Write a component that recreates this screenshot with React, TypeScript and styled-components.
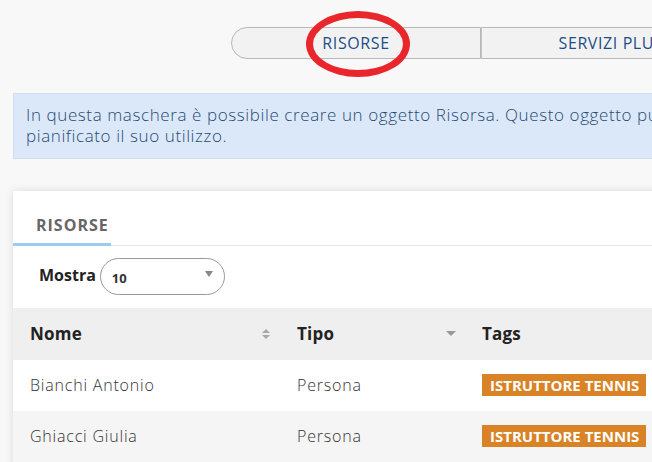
import React from "react";
import styled, { createGlobalStyle } from "styled-components";

const Global = createGlobalStyle`
  html, body { margin: 0; padding: 0; background: #f8f8f8; overflow: hidden; }
  body { font-family: "Open Sans", "Lato", sans-serif; color: #333; }
`;

const Page = styled.div`
  width: 1000px;
  padding-top: 27px;
`;

const TabBar = styled.div`
  display: flex;
  margin-left: 231px;
  height: 32px;
`;

const Tab = styled.div<{ $first?: boolean }>`
  position: relative;
  width: ${(p) => (p.$first ? "250px" : "260px")};
  box-sizing: border-box;
  display: flex;
  align-items: center;
  justify-content: center;
  background: #f2f2f2;
  border: 1px solid #b8b8b8;
  border-left: ${(p) => (p.$first ? "1px solid #b8b8b8" : "1px solid #c4c4c4")};
  border-radius: ${(p) => (p.$first ? "16px 0 0 16px" : "0")};
  color: #1d4d86;
  font-size: 16px;
  letter-spacing: 0.6px;
`;

const Highlight = styled.span`
  position: absolute;
  left: 74px;
  top: -17px;
  width: 104px;
  height: 66px;
  box-sizing: border-box;
  border: 7px solid #e9262b;
  border-radius: 50%;
`;

const Info = styled.div`
  margin: 34px 0 0 13px;
  height: 66px;
  box-sizing: border-box;
  background: #dbe8fa;
  border: 1px solid #d0def0;
  padding: 10px 12px;
  font-size: 17px;
  line-height: 21px;
  letter-spacing: 0.6px;
  color: #284a72;
  font-weight: 300;
  white-space: nowrap;
`;

const Card = styled.div`
  margin: 32px 0 0 13px;
  background: #fff;
  box-shadow: 0 0 8px rgba(0, 0, 0, 0.12);
  min-height: 400px;
`;

const CardTabs = styled.div`
  display: flex;
  height: 54px;
  border-bottom: 1px solid #e6e6e6;
`;

const CardTab = styled.div`
  width: 98px;
  box-sizing: border-box;
  padding-left: 23px;
  display: flex;
  align-items: center;
  padding-top: 15px;
  font-size: 16px;
  font-weight: 700;
  letter-spacing: 1px;
  color: #666;
  border-bottom: 3px solid #9ccbf0;
  margin-bottom: -1px;
`;

const Toolbar = styled.div`
  display: flex;
  align-items: center;
  gap: 4px;
  padding: 12px 0 13px 26px;
`;

const Label = styled.span`
  font-size: 16px;
  font-weight: 700;
  color: #222;
  margin-top: -4px;
`;

const Select = styled.div`
  position: relative;
  width: 125px;
  height: 37px;
  box-sizing: border-box;
  border: 1px solid #999;
  border-radius: 19px;
  display: flex;
  align-items: center;
  padding: 3px 0 0 11px;
  font-size: 13px;
  font-weight: 700;
  color: #333;
`;

const Caret = styled.span`
  position: absolute;
  right: 11px;
  top: 12px;
  width: 0;
  height: 0;
  border-left: 4px solid transparent;
  border-right: 4px solid transparent;
  border-top: 6px solid #888;
`;

const Table = styled.div`
  display: grid;
  grid-template-columns: 267px 185px 1fr;
`;

const HeadCell = styled.div`
  height: 52px;
  background: #efefef;
  display: flex;
  align-items: center;
  justify-content: space-between;
  padding: 0 9px 0 17px;
  font-size: 17px;
  font-weight: 700;
  letter-spacing: 0.2px;
  color: #222;
`;

const HeadText = styled.span`
  margin-top: -2px;
`;

const Cell = styled.div<{ $alt?: boolean }>`
  height: 51px;
  background: ${(p) => (p.$alt ? "#f5f5f5" : "#fff")};
  display: flex;
  align-items: center;
  padding-left: 17px;
  font-size: 16px;
  letter-spacing: 0.8px;
  font-weight: 300;
  color: #333;
`;

const CellText = styled.span`
  margin-top: -1px;
`;

const Badge = styled.span`
  display: inline-flex;
  align-items: center;
  height: 22px;
  padding: 0 7px 0 8px;
  background: #d98226;
  color: #fff;
  font-size: 15px;
  font-weight: 700;
  letter-spacing: 0px;
  margin-top: -2px;
`;

const SortBoth = () => (
  <svg width="10" height="14" viewBox="0 0 10 14">
    <path d="M1 6 L5 2 L9 6 Z" fill="#a8a8a8" />
    <path d="M1 8 L5 12 L9 8 Z" fill="#a8a8a8" />
  </svg>
);

const SortDesc = () => (
  <svg width="10" height="6" viewBox="0 0 10 6">
    <path d="M0 0 L10 0 L5 5 Z" fill="#999" />
  </svg>
);

const rows = [
  { nome: "Bianchi Antonio", tipo: "Persona", tag: "ISTRUTTORE TENNIS" },
  { nome: "Ghiacci Giulia", tipo: "Persona", tag: "ISTRUTTORE TENNIS" },
];

export default function App() {
  return (
    <Page>
      <Global />
      <TabBar>
        <Tab $first>
          RISORSE
          <Highlight />
        </Tab>
        <Tab>SERVIZI PLUS</Tab>
      </TabBar>
      <Info>
        In questa maschera è possibile creare un oggetto Risorsa. Questo oggetto può essere prenotato e ne viene
        <br />
        pianificato il suo utilizzo.
      </Info>
      <Card>
        <CardTabs>
          <CardTab>RISORSE</CardTab>
        </CardTabs>
        <Toolbar>
          <Label>Mostra</Label>
          <Select>
            10
            <Caret />
          </Select>
        </Toolbar>
        <Table>
          <HeadCell>
            <HeadText>Nome</HeadText> <SortBoth />
          </HeadCell>
          <HeadCell>
            <HeadText>Tipo</HeadText> <SortDesc />
          </HeadCell>
          <HeadCell>
            <HeadText>Tags</HeadText>
          </HeadCell>
          {rows.map((r, i) => (
            <React.Fragment key={r.nome}>
              <Cell $alt={i % 2 === 1}>
                <CellText>{r.nome}</CellText>
              </Cell>
              <Cell $alt={i % 2 === 1}>
                <CellText>{r.tipo}</CellText>
              </Cell>
              <Cell $alt={i % 2 === 1}>
                <Badge>{r.tag}</Badge>
              </Cell>
            </React.Fragment>
          ))}
        </Table>
      </Card>
    </Page>
  );
}
